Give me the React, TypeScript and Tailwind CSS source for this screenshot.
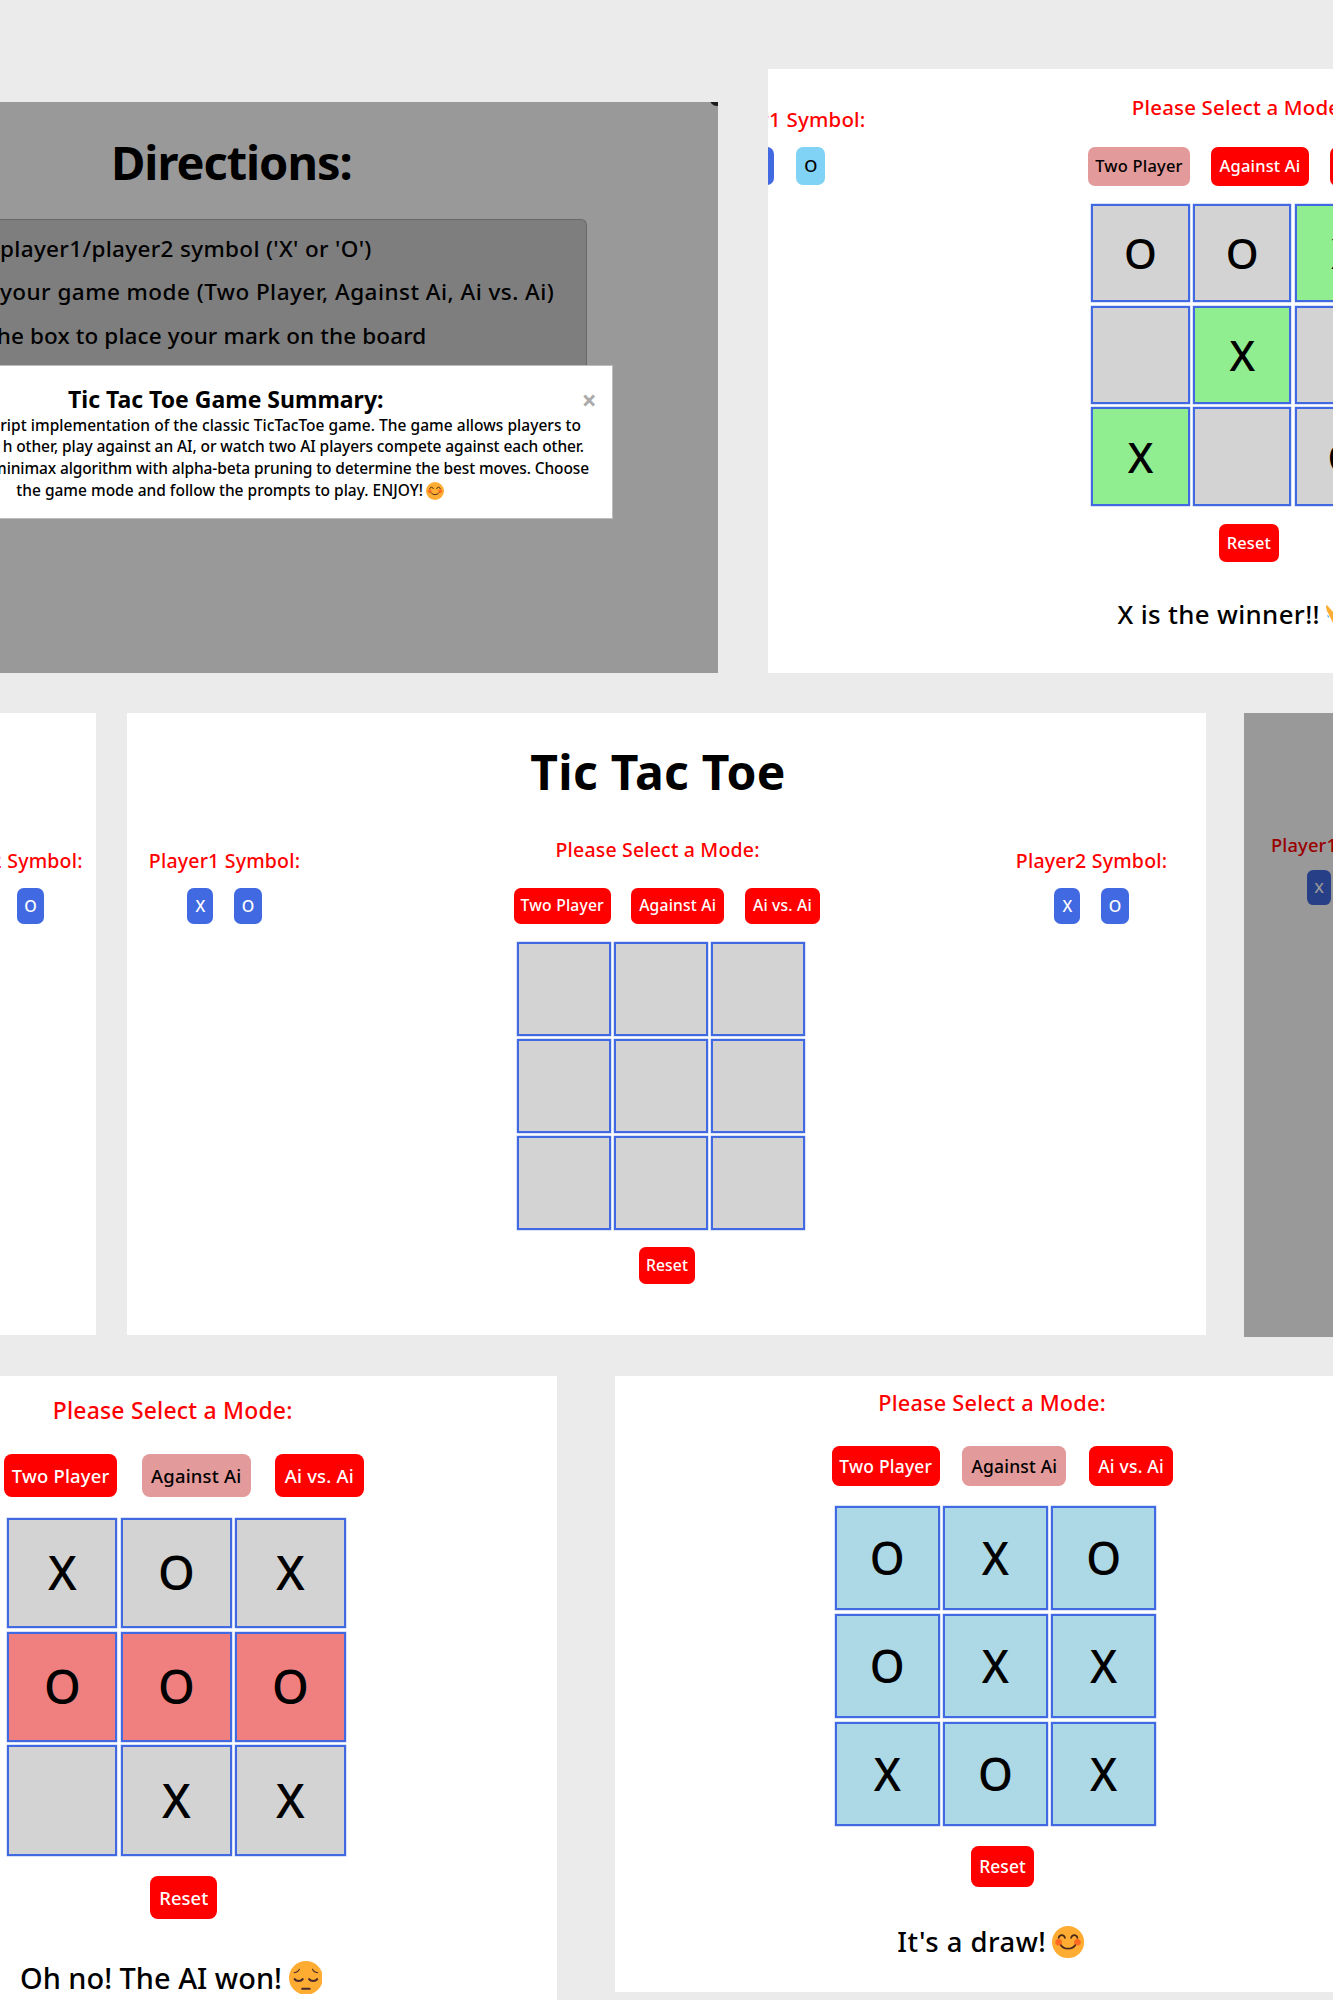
import type { ReactNode } from "react";
import clsx from "clsx";

type Mark = "X" | "O" | "";
type Mode = "Two Player" | "Against Ai" | "Ai vs. Ai";

function Smile({ className }: { className?: string }) {
  return (
    <svg viewBox="0 0 36 36" className={className}>
      <circle cx="18" cy="18" r="18" fill="#ffac33" />
      <circle cx="7.5" cy="18.2" r="3.7" fill="#ff6a22" />
      <circle cx="28.5" cy="18.2" r="3.7" fill="#ff6a22" />
      <g fill="none" stroke="#4b2a1c" strokeWidth="2" strokeLinecap="round">
        <path d="M7.5 13.3c.8-4.2 6.2-4.2 7 0" />
        <path d="M21.500 13.3c.8-4.2 6.2-4.2 7 0" />
        <path d="M10 21.500c3.600 5.200 12.400 5.200 16 0" />
      </g>
    </svg>
  );
}

function Pensive({ className }: { className?: string }) {
  return (
    <svg viewBox="0 0 36 36" className={className}>
      <circle cx="18" cy="18" r="18" fill="#ffac33" />
      <g fill="none" stroke="#4b2a2c" strokeLinecap="round">
        <path d="M6 19.300c1.600 2.600 7 2.600 8.600 0" strokeWidth="2.200" />
        <path d="M21.400 19.300c1.600 2.600 7 2.600 8.600 0" strokeWidth="2.200" />
        <path d="M14 29.600h8" strokeWidth="2.200" />
        <path d="M5.500 12.500c2.800-.4 4.800-1.700 5.500-3.800" strokeWidth="1.200" />
        <path d="M30.500 12.500c-2.800-.4-4.800-1.700-5.500-3.800" strokeWidth="1.200" />
      </g>
    </svg>
  );
}

function Hands({ className }: { className?: string }) {
  return (
    <svg viewBox="0 0 36 36" className={className}>
      <path
        d="M0 7c1-1.500 2.500.2 3.500 2L8 14l20-2c4 6 3 13-4 17-6 2.500-12 3-15 0L3 17C1 13.500 0 10 0 7z"
        fill="#ffac33"
      />
      <path d="M1 18.500l3 1-1.200 2.500z" fill="#55acee" />
    </svg>
  );
}

const pill =
  "flex h-[2.28em] shrink-0 items-center justify-center rounded-[.42em]";

function SymbolPicker({
  player,
  picked,
  className,
}: {
  player: ReactNode;
  picked?: Mark;
  className?: string;
}) {
  return (
    <section
      className={clsx("flex w-[9.44em] shrink-0 flex-col items-center", className)}
    >
      <h3 className="h-[1.5em] leading-[1.5em] whitespace-nowrap text-[#ff0000]">
        <span className="text-[1.22em] tracking-[.01em]">{player} Symbol:</span>
      </h3>
      <div className="mt-[.91em] flex gap-[1.31em]">
        <div className={clsx(pill, "w-[1.625em] bg-[#4169e1] text-white")}>
          <span className="text-[1em]">X</span>
        </div>
        <div
          className={clsx(
            pill,
            "w-[1.72em]",
            picked === "O" ? "bg-[#81d3f5] text-black" : "bg-[#4169e1] text-white",
          )}
        >
          <span className="text-[1em]">O</span>
        </div>
      </div>
    </section>
  );
}

const modes: { name: Mode; width: string }[] = [
  { name: "Two Player", width: "w-[6.03em]" },
  { name: "Against Ai", width: "w-[5.82em]" },
  { name: "Ai vs. Ai", width: "w-[4.70em]" },
];

function Game({
  board,
  mode,
  lit = [],
  litColor = "",
  className,
  children,
}: {
  board: Mark[];
  mode?: Mode;
  lit?: number[];
  litColor?: string;
  className?: string;
  children?: ReactNode;
}) {
  return (
    <section className={clsx("flex w-[19.125em] shrink-0 flex-col", className)}>
      <h3 className="flex h-[1.5em] justify-center pr-[1.18em] leading-[1.5em] whitespace-nowrap text-[#ff0000]">
        <span className="text-[1.22em] leading-[1.230em] tracking-[.009em]">
          Please Select a Mode:
        </span>
      </h3>
      <div className="mt-[1.62em] flex justify-between">
        {modes.map((m) => (
          <div
            key={m.name}
            className={clsx(
              pill,
              m.width,
              m.name === mode ? "bg-[#e39a9a] text-black" : "bg-[#ff0000] text-white",
            )}
          >
            <span className="text-[.98em] tracking-[.012em] whitespace-nowrap">{m.name}</span>
          </div>
        ))}
      </div>
      <div className="mt-[1.1em] ml-[.17em] grid w-[18em] grid-cols-3 gap-[.2em]">
        {board.map((mark, i) => (
          <div
            key={i}
            className={clsx(
              "flex h-[5.86em] items-center justify-center border-2 border-[#4169e1] shadow-[0_0_0_.5px_#4169e166]",
              lit.includes(i) ? litColor : "bg-[#d3d3d3]",
            )}
          >
            <span className="text-[2.5em] leading-none">{mark}</span>
          </div>
        ))}
      </div>
      <div className={clsx(pill, "mt-[1.1em] w-[3.55em] self-center bg-[#ff0000] text-white")}>
        <span className="text-[.98em] tracking-[.005em]">Reset</span>
      </div>
      {children && (
        <div className="mt-[2.1em] flex h-[2em] items-center justify-center pr-[1.34em] whitespace-nowrap">
          {children}
        </div>
      )}
    </section>
  );
}

const empty: Mark[] = ["", "", "", "", "", "", "", "", ""];

export default function App() {
  return (
    <main className="flex h-[2000px] w-[1333px] flex-col overflow-hidden bg-[#ebebeb] pt-[69px] font-['Noto_Sans',sans-serif] font-medium text-black">
      <div className="flex h-[604px] shrink-0 gap-[50px]">
        <article className="relative mt-[33px] h-[571px] w-[718px] shrink-0 overflow-hidden bg-white">
          <h1 className="pt-[30px] pl-[111px] text-[47px] leading-[60px] font-bold tracking-[-.022em]">
            Directions:
          </h1>
          <div className="mt-[27px] h-[200px] w-[587px] rounded-tr-md border-t border-r border-[#aeaeae] bg-[#d3d3d3] pt-[7px] text-[22.500px] leading-[43.400px] whitespace-nowrap">
            <p className="tracking-[.33px]">player1/player2 symbol ('X' or 'O')</p>
            <p className="tracking-[.46px]">your game mode (Two Player, Against Ai, Ai vs. Ai)</p>
            <p className="-ml-[12px] tracking-[.12px]">the box to place your mark on the board</p>
          </div>
          <div className="absolute inset-0 bg-black/40" />
          <div className="absolute -top-[9px] left-[710px] size-[13px] rounded-full bg-[#1c1c1c]" />
          <div className="absolute top-[263px] left-0 h-[154px] w-[613px] border-y border-r border-[#bdbdbd] bg-white pt-[19px]">
            <h2 className="pl-[68px] text-[23px] leading-[28px] font-bold whitespace-nowrap">
              Tic Tac Toe Game Summary:
            </h2>
            <div className="mt-[2px] flex flex-col items-end text-[15.500px] leading-[21.400px] whitespace-nowrap">
              <p className="mr-[31px] tracking-[.03px]">
                ript implementation of the classic TicTacToe game. The game allows players to
              </p>
              <p className="mr-[28px] tracking-[-.08px]">
                h other, play against an AI, or watch two AI players compete against each other.
              </p>
              <p className="mr-[23px] tracking-[-.12px]">
                minimax algorithm with alpha-beta pruning to determine the best moves. Choose
              </p>
              <p className="mt-px mr-[168px] flex items-center gap-[3px]">
                the game mode and follow the prompts to play. ENJOY!
                <Smile className="size-[18px]" />
              </p>
            </div>
            <span className="absolute top-[20px] right-[15.500px] text-[26px] leading-[28px] font-bold text-[#aaaaaa]">
              ×
            </span>
          </div>
        </article>

        <article className="flex w-[565px] shrink-0 overflow-hidden bg-white text-[16.780px]">
          <SymbolPicker player="Player1" picked="O" className="mt-[37.500px] -ml-[61px]" />
          <Game
            className="mt-[26px] ml-[223px]"
            mode="Two Player"
            board={["O", "O", "X", "", "X", "", "X", "", "O"]}
            lit={[2, 4, 6]}
            litColor="bg-[#90ee90]"
          >
            <span className="-ml-[.1em] text-[1.54em] tracking-[.014em]">X is the winner!!</span>
            <Hands className="ml-[.35em] size-[1.75em] shrink-0" />
          </Game>
        </article>
      </div>

      <div className="mt-[40px] flex h-[622px] shrink-0">
        <article className="w-[96px] shrink-0 overflow-hidden bg-white text-base">
          <SymbolPicker player="Player2" className="mt-[136px] -ml-[68.500px]" />
        </article>

        <article className="ml-[31px] w-[1079px] shrink-0 overflow-hidden bg-white text-base">
          <h1 className="pt-[29px] pr-[17px] text-center text-[48px] leading-[60px] font-bold tracking-[.3px]">
            Tic Tac Toe
          </h1>
          <div className="mt-[36px] flex pl-[22px]">
            <SymbolPicker player="Player1" className="mt-[11px]" />
            <Game className="ml-[214px]" board={empty} />
            <SymbolPicker player="Player2" className="mt-[11px] ml-[196px]" />
          </div>
        </article>

        <article className="relative ml-[38px] h-[624px] w-[89px] shrink-0 overflow-hidden bg-white text-[15.040px]">
          <SymbolPicker player="Player1" className="mt-[121px] ml-[27px]" />
          <div className="absolute inset-0 bg-black/40" />
        </article>
      </div>

      <div className="mt-[41px] flex h-[625px] shrink-0">
        <article className="w-[557px] shrink-0 overflow-hidden bg-white text-[18.800px]">
          <Game
            className="mt-[19.500px] ml-[4px]"
            mode="Against Ai"
            board={["X", "O", "X", "O", "O", "O", "", "X", "X"]}
            lit={[3, 4, 5]}
            litColor="bg-[#f08080]"
          >
            <span className="text-[1.54em]">Oh no! The AI won!</span>
            <Pensive className="ml-[.35em] size-[1.8em] shrink-0" />
          </Game>
        </article>

        <article className="ml-[58px] h-[616px] w-[718px] shrink-0 overflow-hidden bg-white text-[17.830px]">
          <Game
            className="mt-[14px] ml-[217px]"
            mode="Against Ai"
            board={["O", "X", "O", "O", "X", "X", "X", "O", "X"]}
            lit={[0, 1, 2, 3, 4, 5, 6, 7, 8]}
            litColor="bg-[#add8e6]"
          >
            <span className="text-[1.54em] tracking-[.018em]">It's a draw!</span>
            <Smile className="ml-[.3em] size-[1.8em] shrink-0" />
          </Game>
        </article>
      </div>
    </main>
  );
}
